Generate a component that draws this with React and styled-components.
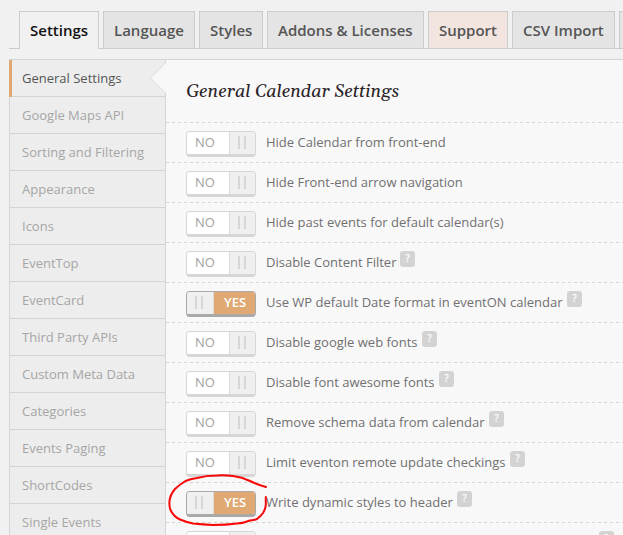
import React from 'react';
import styled, { createGlobalStyle } from 'styled-components';

const GlobalStyle = createGlobalStyle`
  * { box-sizing: border-box; }
  html, body { margin: 0; height: 100%; overflow: hidden; background: #f1f1f1; }
  body { font-family: 'Open Sans', 'Noto Sans', sans-serif; }
`;

const Page = styled.div`
  position: relative;
  width: 623px;
  height: 535px;
  overflow: hidden;
  padding: 11px 0 0 9px;
  background: #f1f1f1;
`;

const TabBar = styled.nav`
  display: flex;
  gap: 4px;
  height: 38px;
  padding-left: 10px;
  border-bottom: 1px solid #ccc;
`;

const Tab = styled.a`
  flex: none;
  width: ${(p) => p.$width}px;
  height: ${(p) => (p.$active ? 38 : 37)}px;
  padding-left: 10px;
  border: 1px solid #ccc;
  border-bottom: 0;
  background: ${(p) => (p.$active ? '#f1f1f1' : p.$tint || '#e4e4e4')};
  color: ${(p) => (p.$active ? '#111' : '#555')};
  font-size: 15px;
  font-weight: 600;
  line-height: 37px;
  white-space: nowrap;
`;

const Panel = styled.div`
  display: flex;
  height: 500px;
  margin-top: 10px;
  border-top: 1px solid #d4d4d4;
  border-left: 1px solid #d4d4d4;
`;

const Sidebar = styled.ul`
  flex: none;
  width: 156px;
  margin: 0;
  padding: 0;
  list-style: none;
  background: #ededed;
  border-right: 1px solid #d4d4d4;
`;

const SideItem = styled.li`
  position: relative;
  height: 37px;
  padding-left: 12px;
  border-bottom: 1px solid #d4d4d4;
  color: ${(p) => (p.$active ? '#555' : '#a6a6a6')};
  font-size: 13px;
  line-height: 37px;
  white-space: nowrap;
`;

const ActiveBar = styled.span`
  position: absolute;
  left: -1px;
  top: 0;
  width: 3px;
  height: 37px;
  background: #e0a872;
`;

const Notch = styled.svg`
  position: absolute;
  right: -1px;
  top: 2px;
`;

const Content = styled.main`
  flex: 1;
  min-width: 0;
  background: #f9f8f9;
`;

const Heading = styled.h2`
  height: 62px;
  margin: 0;
  padding-left: 20px;
  color: #2a2427;
  font: italic 400 18px/64px Gelasio, Georgia, 'Liberation Serif', serif;
  white-space: nowrap;
`;

const Row = styled.div`
  display: flex;
  align-items: flex-start;
  height: 40px;
  padding: 9px 0 0 20px;
  background: repeating-linear-gradient(to right, #d4d4d4 0 3px, transparent 3px 6px) 0 0 / 100% 1px no-repeat;
`;

const Toggle = styled.span`
  display: flex;
  flex: none;
  flex-direction: ${(p) => (p.$on ? 'row-reverse' : 'row')};
  width: 70px;
  height: 26px;
  overflow: hidden;
  border: 1px solid ${(p) => (p.$on ? '#a9a9a9' : '#d6d6d6')};
  border-bottom-width: 3px;
  border-radius: 4px;
  background: #fff;
`;

const ToggleText = styled.span`
  width: ${(p) => (p.$on ? 41 : 42)}px;
  padding-left: ${(p) => (p.$on ? 10 : 8)}px;
  background: ${(p) => (p.$on ? '#e0a872' : '#fff')};
  color: ${(p) => (p.$on ? '#fff' : '#a0a0a0')};
  font-size: 13px;
  font-weight: ${(p) => (p.$on ? 600 : 400)};
  line-height: 21px;
`;

const Handle = styled.span`
  display: flex;
  flex: 1;
  align-items: flex-start;
  padding: 4px 0 0 8px;
  gap: 4px;
  background: #efefef;
  border-left: ${(p) => (p.$on ? 0 : 1)}px solid #dadada;
  border-right: ${(p) => (p.$on ? 1 : 0)}px solid #dadada;
  &::before, &::after {
    content: '';
    width: 2px;
    height: 13px;
    background: #d6d6d6;
  }
`;

const Label = styled.span`
  margin-left: 10px;
  color: #707070;
  font-size: 13px;
  line-height: 22px;
  white-space: nowrap;
  width: ${(p) => p.$width}px;
`;

const Help = styled.span`
  flex: none;
  width: 15px;
  height: 16px;
  border-radius: 3px;
  background: #d4d3d4;
  color: #fff;
  font-size: 10px;
  font-weight: 600;
  line-height: 15px;
  text-align: center;
`;

const Marker = styled.svg`
  position: absolute;
  left: 0;
  top: 0;
  pointer-events: none;
`;

const tabs = [
  { text: 'Settings', width: 80, active: true },
  { text: 'Language', width: 92 },
  { text: 'Styles', width: 64 },
  { text: 'Addons & Licenses', width: 157 },
  { text: 'Support', width: 80, tint: '#f2e4df' },
  { text: 'CSV Import', width: 103 },
  { text: '', width: 80 },
];

const sections = [
  'General Settings', 'Google Maps API', 'Sorting and Filtering', 'Appearance', 'Icons',
  'EventTop', 'EventCard', 'Third Party APIs', 'Custom Meta Data', 'Categories',
  'Events Paging', 'ShortCodes', 'Single Events',
];

const settings = [
  { text: 'Hide Calendar from front-end', width: 190 },
  { text: 'Hide Front-end arrow navigation', width: 210 },
  { text: 'Hide past events for default calendar(s)', width: 250 },
  { text: 'Disable Content Filter', width: 134, help: true },
  { text: 'Use WP default Date format in eventON calendar', width: 301, help: true, on: true },
  { text: 'Disable google web fonts', width: 156, help: true },
  { text: 'Disable font awesome fonts', width: 173, help: true },
  { text: 'Remove schema data from calendar', width: 223, help: true },
  { text: 'Limit eventon remote update checkings', width: 244, help: true },
  { text: 'Write dynamic styles to header', width: 191, help: true, on: true },
  { text: '', width: 333, help: true },
];

export default function App() {
  return (
    <>
      <GlobalStyle />
      <Page>
        <TabBar>
          {tabs.map((t, i) => (
            <Tab key={i} $width={t.width} $active={t.active} $tint={t.tint}>{t.text}</Tab>
          ))}
        </TabBar>
        <Panel>
          <Sidebar>
            {sections.map((name, i) => (
              <SideItem key={name} $active={i === 0}>
                {i === 0 && <ActiveBar />}
                {name}
                {i === 0 && (
                  <Notch width="17" height="32" viewBox="0 0 17 32">
                    <path d="M17 0.5 L1.5 16 L17 31.5 Z" fill="#f9f8f9" />
                    <path d="M16.5 1 L1.5 16 L16.5 31" fill="none" stroke="#dcdcdc" />
                  </Notch>
                )}
              </SideItem>
            ))}
          </Sidebar>
          <Content>
            <Heading>General Calendar Settings</Heading>
            {settings.map((s, i) => (
              <Row key={i}>
                <Toggle $on={s.on}>
                  <ToggleText $on={s.on}>{s.on ? 'YES' : 'NO'}</ToggleText>
                  <Handle $on={s.on} />
                </Toggle>
                <Label $width={s.width}>{s.text}</Label>
                {s.help && <Help>?</Help>}
              </Row>
            ))}
          </Content>
        </Panel>
        <Marker width="623" height="535" viewBox="0 0 623 535">
          <path
            d="M266 487 Q258 485 250 481 Q242 477 233 476 Q225 475 217 475.500 Q206 475.500 197 478 Q190 479 185.500 481 Q179 485 175 489 Q170 495 169.500 501 Q169 506 170.500 510 Q174 517 180 519.500 Q186 522 193 523.500 Q203 524.500 213 525 Q226 525 237 523.500 Q244 523 250 520.500 Q255 520 257 519 Q261 516 263 513 Q266 508 265.800 504 L265.800 497"
            fill="none" stroke="#f80808" strokeWidth="2" strokeLinecap="round" strokeLinejoin="round"
          />
        </Marker>
      </Page>
    </>
  );
}
